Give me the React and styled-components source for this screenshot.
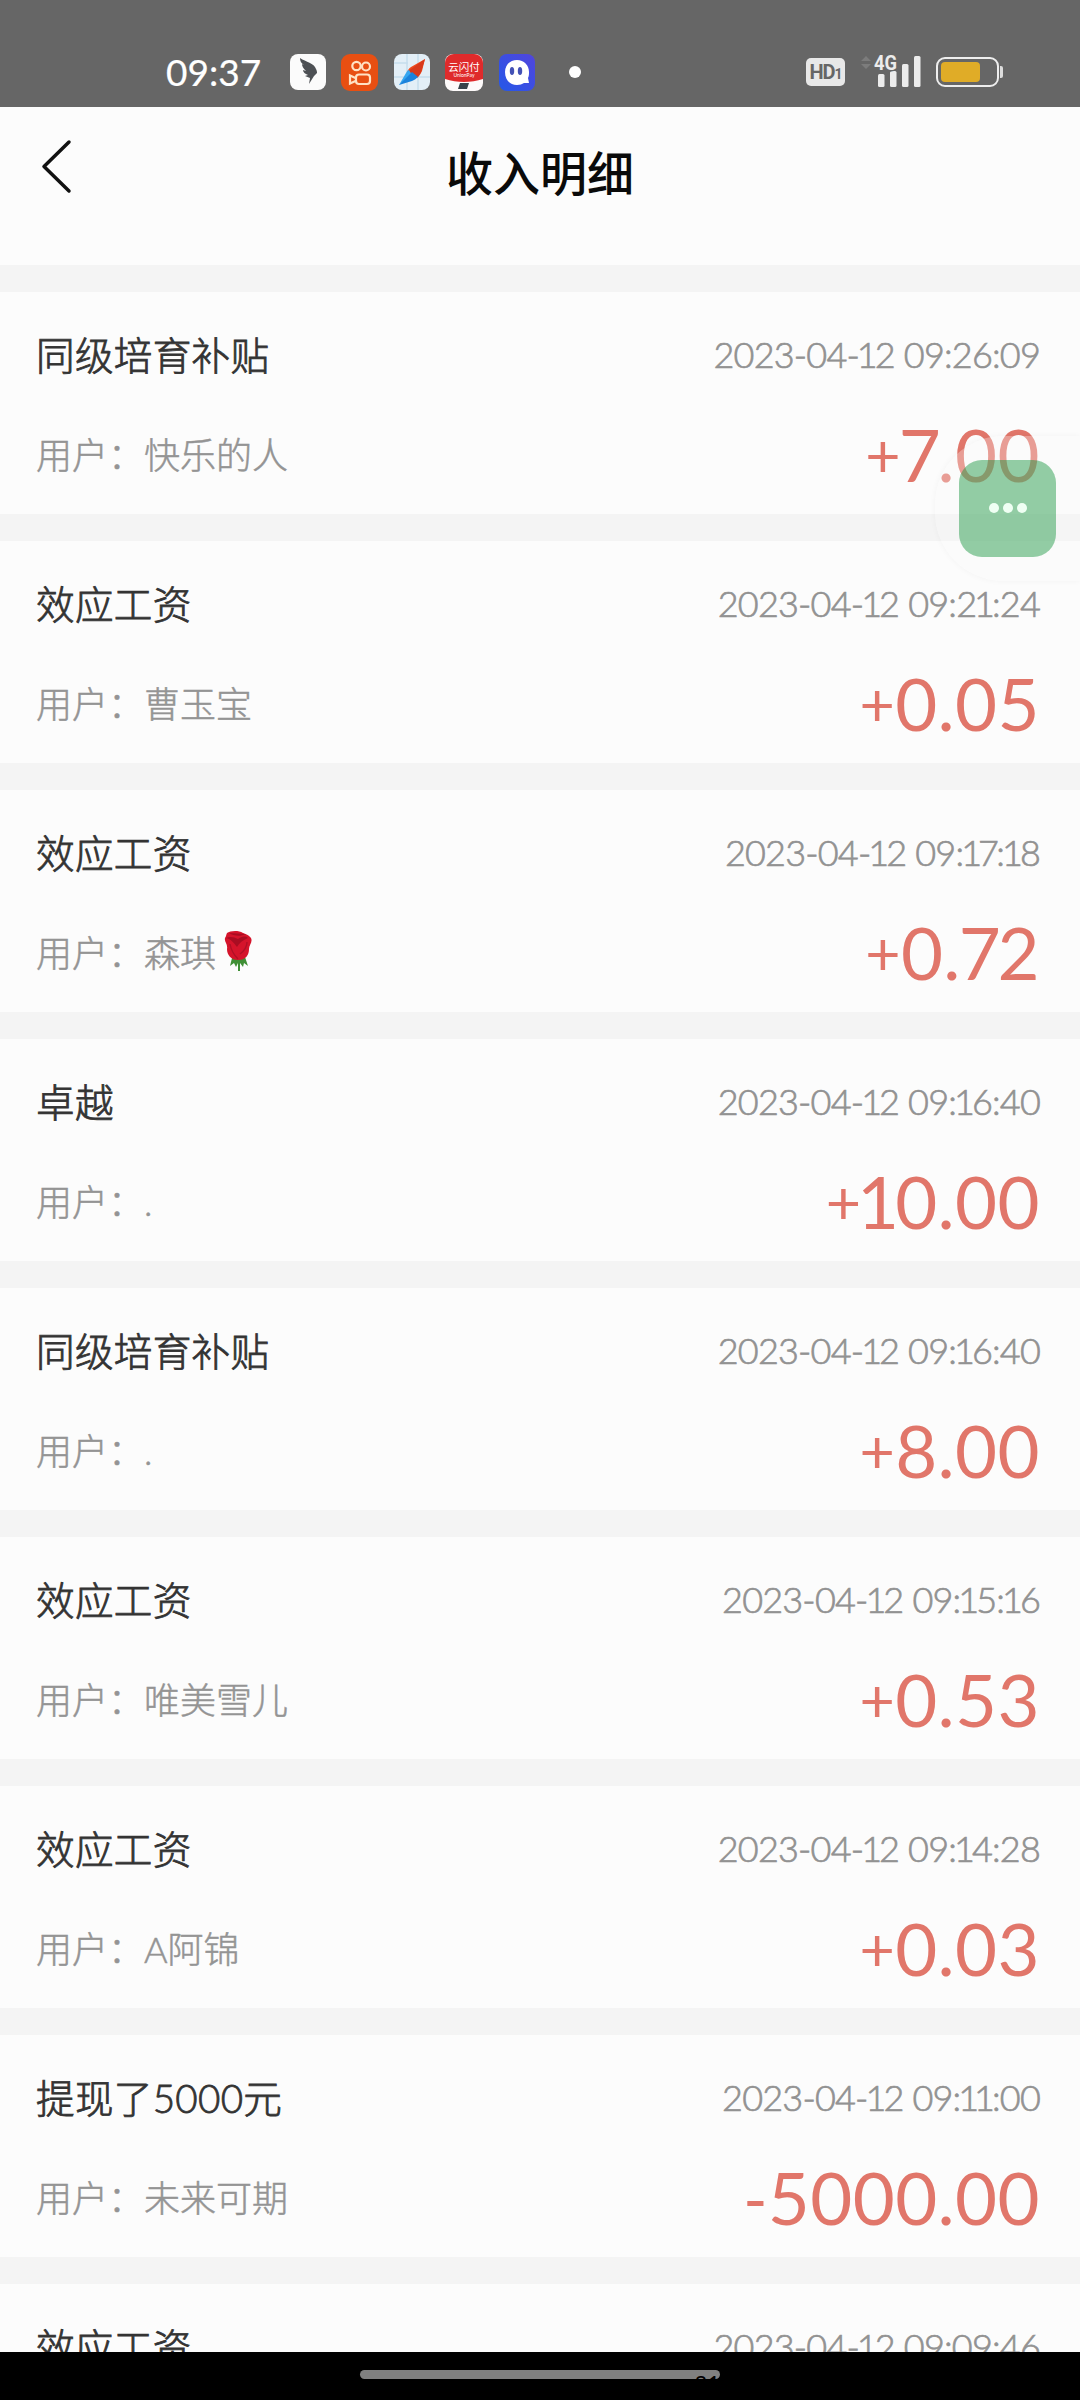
import styled, { createGlobalStyle } from 'styled-components'

const records = [
  { title: '同级培育补贴', time: '2023-04-12 09:26:09', user: '快乐的人', amount: '+7.00' },
  { title: '效应工资', time: '2023-04-12 09:21:24', user: '曹玉宝', amount: '+0.05' },
  { title: '效应工资', time: '2023-04-12 09:17:18', user: '森琪', rose: true, amount: '+0.72' },
  { title: '卓越', time: '2023-04-12 09:16:40', user: '.', amount: '+10.00' },
  { title: '同级培育补贴', time: '2023-04-12 09:16:40', user: '.', amount: '+8.00' },
  { title: '效应工资', time: '2023-04-12 09:15:16', user: '唯美雪儿', amount: '+0.53' },
  { title: '效应工资', time: '2023-04-12 09:14:28', user: 'A阿锦', amount: '+0.03' },
  { title: '提现了5000元', time: '2023-04-12 09:11:00', user: '未来可期', amount: '-5000.00' },
  { title: '效应工资', time: '2023-04-12 09:09:46', user: '', amount: '' },
]

// ones and sevens are narrower than the other figures
const Figures = ({ text }) =>
  text.split(/([17])/).map((part, i) =>
    /^[17]$/.test(part) ? <Narrow key={i} $one={part === '1'}>{part}</Narrow> : part
  )

const Rose = () => (
  <RoseIcon viewBox="0 0 28 42">
    <path d="M8 28l-2 8 4-3 2 4 2-4v8h2v-8l3 4 1-4 4 3-3-9z" fill="#3f8f35" />
    <path d="M1 8C0 12 4 14 3 19c0 6 4 11 11 11 8 0 11-5 11-11 0-4 4-7 2-11-3-4-6-4-8-5-5-3-13-2-16 0-1 2-1 4-2 5z" fill="#d5142b" />
    <path d="M2 8c5 1 8 5 11 9 2-4 6-7 11-9-3-3-7-1-10 1-4-2-8-3-12-1zM5 3c5 3 11 4 17 1" fill="#a90d22" />
    <path d="M6 14c1 6 4 11 8 15M23 12c0 5-3 9-7 12" stroke="#b01026" strokeWidth="1.4" fill="none" />
  </RoseIcon>
)

const AppIcons = () => (
  <Apps>
    <svg width="36" height="36" viewBox="0 0 36 36">
      <rect width="36" height="36" rx="8" fill="#fbfbfb" />
      <path d="M10 4c6 4 14 5 16 11 1 2 1 3 1 4l-3 3-5 8 1-6-5-2 3-1c-3-1-5-3-5-5l3 1c-3-3-4-5-4-7l2 1c-3-2-4-4-4-7z" fill="#4d5054" />
    </svg>
    <svg width="37" height="37" viewBox="0 0 37 37">
      <rect width="37" height="37" rx="9" fill="#e84f12" />
      <g fill="none" stroke="#ffe2c4" strokeWidth="2.2">
        <circle cx="15.500" cy="12" r="4.200" />
        <circle cx="25" cy="12.500" r="4" />
        <rect x="15" y="20.500" width="14" height="9.500" rx="3" />
        <path d="M14.500 24l-5.500-2.500v8l5.500-2.500" />
      </g>
    </svg>
    <svg width="36" height="36" viewBox="0 0 36 36">
      <rect width="36" height="36" rx="8" fill="#e3eff7" />
      <path d="M0 23h36M13 0v36M24 0v36M0 9h14" stroke="#c6deed" strokeWidth="1.500" />
      <path d="M31 5L17 13c-2 1-3 3-4 5l11 5c2-2 3-4 4-6z" fill="#ee4b1e" />
      <path d="M31 5L13 18l10 6c2-2 3-4 4-6z" fill="#d83a1c" />
      <path d="M5 31l7-12c1-2 2-3 3-3l3 5z" fill="#35a6f0" />
      <path d="M5 31l13-13 6 5c-2 2-4 3-6 4z" fill="#1a83dc" />
    </svg>
    <svg width="38" height="37" viewBox="0 0 38 37">
      <rect width="38" height="37" rx="8" fill="#fdfafa" />
      <path d="M0 25V9c0-5 4-9 9-9h20c5 0 9 4 9 9v16c-12 4-26 4-38 0z" fill="#df2a2b" />
      <text x="19" y="16.500" textAnchor="middle" fontSize="10.500" fontFamily="Noto Sans CJK SC, sans-serif" fill="#fff">云闪付</text>
      <text x="19" y="23" textAnchor="middle" fontSize="5" fontFamily="Lato, sans-serif" fill="#fff">UnionPay</text>
      <path d="M15 29h9l-2 6h-9z" fill="#39434b" />
    </svg>
    <svg width="36" height="37" viewBox="0 0 36 37">
      <defs>
        <linearGradient id="ghost" x1="0" y1="1" x2="1" y2="0">
          <stop offset="0" stopColor="#2558e8" />
          <stop offset="1" stopColor="#5145dc" />
        </linearGradient>
      </defs>
      <rect width="36" height="37" rx="8" fill="url(#ghost)" />
      <path d="M18 6c7 0 12 5 12 12 0 2 0 4-1 6l1 5h-5c-2 1-4 2-7 2-7 0-12-5-12-13 0-7 5-12 12-12z" fill="#fff" />
      <ellipse cx="13" cy="17" rx="2.200" ry="4" fill="#4351b5" />
      <ellipse cx="21" cy="17" rx="2.200" ry="4" fill="#4351b5" />
    </svg>
    <Dot />
  </Apps>
)

const App = () => (
  <>
    <GlobalStyle />
    <Screen>
      <StatusBar>
        <Clock>09:37</Clock>
        <AppIcons />
        <Hd>HD<small>1</small></Hd>
        <svg width="62" height="36" viewBox="0 0 62 36">
          <path d="M7 2l5 5H2zM7 15l5-5H2z" fill="#7c7c7c" />
          <g fill="#ececec">
            <rect x="19" y="20" width="6.500" height="13" rx="1.500" />
            <rect x="31" y="17" width="6.500" height="16" rx="1.500" />
            <rect x="43" y="10" width="6.500" height="23" rx="1.500" />
            <rect x="55" y="2" width="6.500" height="31" rx="1.500" />
          </g>
          <text x="15" y="16" fontSize="21" fontWeight="700" fontFamily="Roboto, sans-serif" fill="#ececec" stroke="#666" strokeWidth="3" paintOrder="stroke" textLength="23" lengthAdjust="spacingAndGlyphs">4G</text>
        </svg>
        <Battery><Charge /></Battery>
      </StatusBar>
      <Header>
        <Back width="32" height="56" viewBox="0 0 32 56">
          <path d="M29 4L4 28.500 29 53" />
        </Back>
        <PageTitle>收入明细</PageTitle>
      </Header>
      <List>
        {records.map((r, i) => (
          <Card key={i}>
            <Row>
              <Name>{r.title}</Name>
              <Time><Figures text={r.time} /></Time>
            </Row>
            <Row>
              <User>用户：{r.user}{r.rose && <Rose />}</User>
              <Amount>
                <Sign $minus={r.amount[0] === '-'}>{r.amount[0]}</Sign>
                <Figures text={r.amount.slice(1)} />
              </Amount>
            </Row>
          </Card>
        ))}
      </List>
      <NavBar>
        <Handle>21</Handle>
      </NavBar>
      <Halo>
        <Floating><i /><i /><i /></Floating>
      </Halo>
    </Screen>
  </>
)

export default App

const GlobalStyle = createGlobalStyle`
  body {
    margin: 0;
    background: #000;
    font-family: Lato, 'Noto Sans CJK SC', sans-serif;
  }
`

const Screen = styled.div`
  position: relative;
  display: flex;
  flex-direction: column;
  width: 1080px;
  height: 2400px;
  overflow: hidden;
`

const StatusBar = styled.div`
  display: flex;
  align-items: center;
  flex: none;
  box-sizing: border-box;
  height: 107px;
  padding: 37px 81px 0 166px;
  background: #666;
`

const Clock = styled.div`
  width: 124px;
  color: #fff;
  font-size: 37px;
  line-height: 40px;
  -webkit-text-stroke: 0.2px #fff;
`

const Apps = styled.div`
  display: flex;
  align-items: center;
  gap: 15.4px;
`

const Dot = styled.div`
  width: 12px;
  height: 12px;
  margin-left: 19px;
  border-radius: 50%;
  background: #fff;
`

const Hd = styled.div`
  width: 39px;
  height: 28px;
  margin-left: auto;
  margin-right: 14px;
  border-radius: 5px;
  background: #e8e8e8;
  color: #666;
  text-align: center;
  font: 700 20px/28px Roboto, sans-serif;
  letter-spacing: -1px;

  small {
    font-size: 14px;
  }
`

const Battery = styled.div`
  position: relative;
  box-sizing: border-box;
  width: 63px;
  height: 30px;
  margin-left: 15px;
  padding: 3px;
  border: 2px solid #eee;
  border-radius: 9px;

  &::after {
    content: '';
    position: absolute;
    right: -6px;
    top: 7px;
    width: 3px;
    height: 12px;
    border-radius: 0 2px 2px 0;
    background: #ddd;
  }
`

const Charge = styled.div`
  width: 39px;
  height: 20px;
  border-radius: 4px;
  background: #e0ac27;
`

const Header = styled.header`
  display: grid;
  grid-template-columns: 100px 1fr 100px;
  align-items: start;
  flex: none;
  height: 158px;
  background: #fcfcfc;
`

const Back = styled.svg`
  margin: 31px 0 0 40px;
  fill: none;
  stroke: #111;
  stroke-width: 3.5;
  stroke-linecap: round;
  stroke-linejoin: round;
`

const PageTitle = styled.h1`
  margin: 29px 0 0;
  color: #0a0a0a;
  text-align: center;
  font: 500 47px/70px 'Noto Sans CJK SC', sans-serif;
`

const List = styled.main`
  flex: 1;
  min-height: 0;
  overflow: hidden;
  background: #f4f4f4;
`

const Card = styled.section`
  box-sizing: border-box;
  height: 222px;
  margin-top: 27px;
  padding: 12px 40px 0 36px;
  background: #fcfcfc;
`

const Row = styled.div`
  display: flex;
  justify-content: space-between;
  align-items: center;
  height: 99px;
`

const Name = styled.div`
  padding-bottom: 2px;
  color: #333;
  font-size: 38.6px;
  font-weight: 300;
  letter-spacing: 0.3px;
  -webkit-text-stroke: 0.8px #333;
`

const Time = styled.div`
  color: #929292;
  font-size: 36px;
  font-weight: 300;
  letter-spacing: -0.8px;
  white-space: nowrap;
  -webkit-text-stroke: 0.7px #929292;
`

const User = styled.div`
  display: flex;
  align-items: center;
  color: #949494;
  font-size: 36px;
  font-weight: 300;
  -webkit-text-stroke: 0.5px #949494;
`

const Amount = styled.div`
  padding-top: 2px;
  color: #e1766a;
  font-size: 72.5px;
  line-height: 88px;
  letter-spacing: 0.4px;
  white-space: nowrap;
`

const Sign = styled.span`
  font-size: ${(p) => (p.$minus ? '0.9em' : '0.84em')};
  line-height: 1;
  vertical-align: ${(p) => (p.$minus ? '2px' : '5px')};
`

const Narrow = styled.span`
  margin: ${(p) => (p.$one ? '0 -0.06em' : '0 -0.05em 0 -0.03em')};
`

const RoseIcon = styled.svg`
  width: 28px;
  height: 42px;
  margin-left: 8px;
`

const NavBar = styled.footer`
  display: flex;
  justify-content: center;
  flex: none;
  height: 48px;
  background: #000;
`

const Handle = styled.div`
  box-sizing: border-box;
  width: 360px;
  height: 9px;
  margin-top: 18px;
  border-radius: 5px;
  overflow: hidden;
  background: #808080;
  color: #000;
  text-align: right;
  font-size: 22px;
  line-height: 25px;
`

const Halo = styled.div`
  position: absolute;
  top: 436px;
  right: 0;
  box-sizing: border-box;
  width: 145px;
  height: 145px;
  padding: 24px;
  border-radius: 68px 0 0 68px;
  background: rgba(249, 249, 249, 0.3);
  box-shadow: 0 0 6px rgba(0, 0, 0, 0.04);
`

const Floating = styled.div`
  display: flex;
  justify-content: center;
  gap: 4px;
  box-sizing: border-box;
  width: 97px;
  height: 97px;
  padding-top: 43px;
  border-radius: 23px;
  background: rgba(22, 148, 60, 0.46);

  i {
    width: 10px;
    height: 10px;
    border-radius: 50%;
    background: #effff3;
  }
`
